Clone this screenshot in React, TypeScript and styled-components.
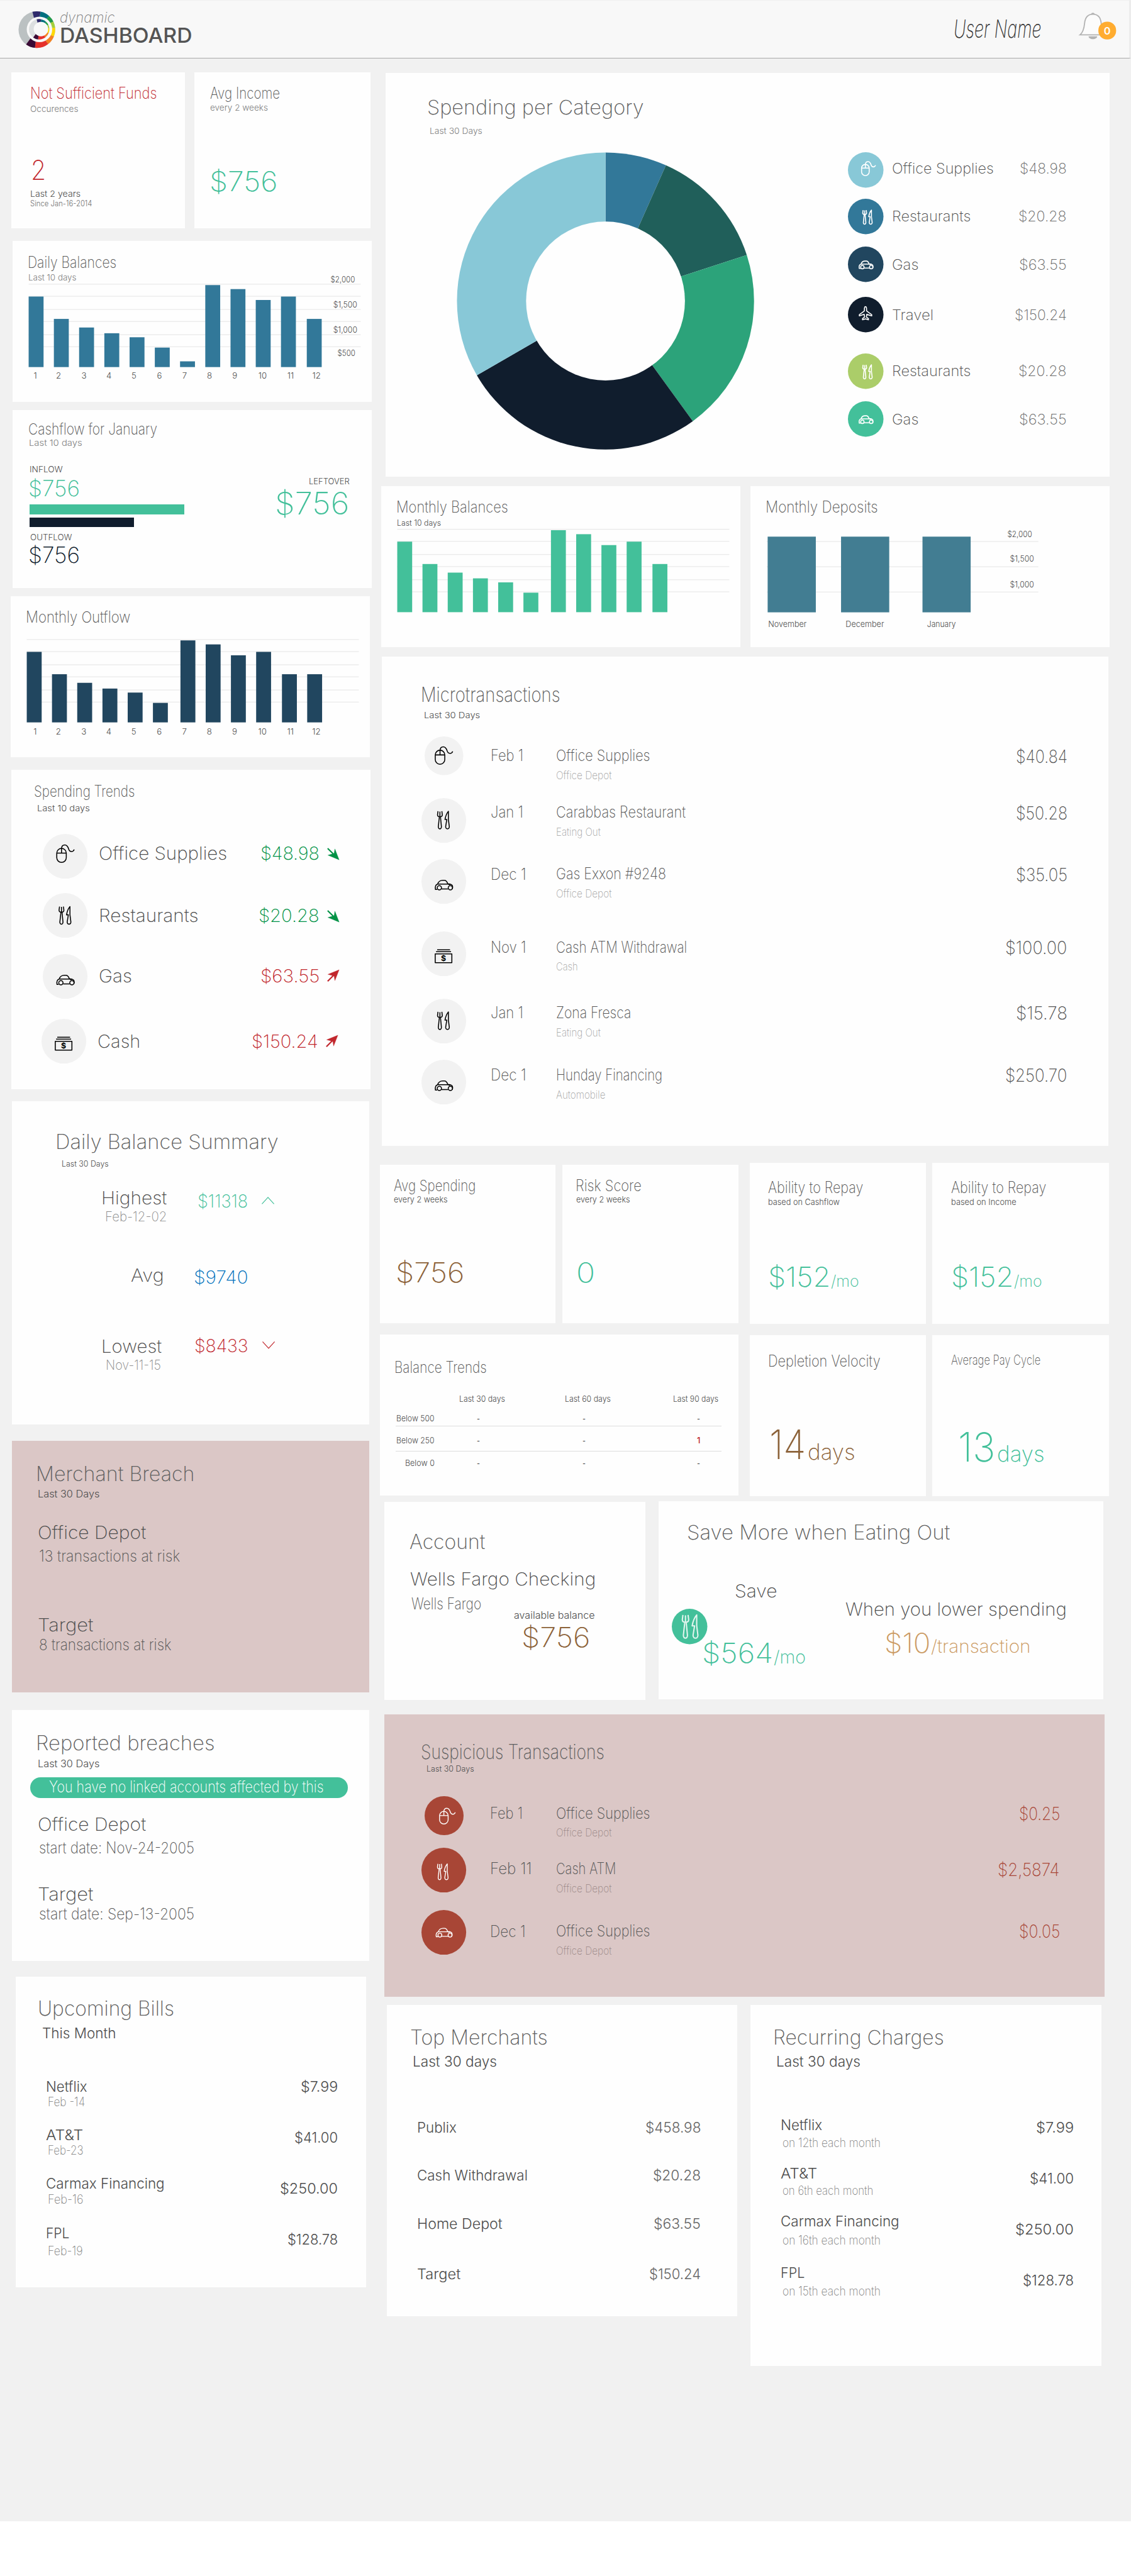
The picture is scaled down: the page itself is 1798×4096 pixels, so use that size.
import React from "react";
import styled, { createGlobalStyle } from "styled-components";

const GlobalStyle = createGlobalStyle`
  html, body { margin: 0; padding: 0; background: #fff; overflow: hidden; }
  * { box-sizing: border-box; }
`;

const FONT = 'Inter, "Open Sans", sans-serif';

const c = {
  ink: "#4d4d4d",
  grey: "#808080",
  soft: "#a6a6a6",
  green: "#43c09a",
  up: "#c1272d",
  down: "#009245",
  blue: "#0071bc",
  brown: "#8c6239",
  tan: "#cb9a62",
  navy: "#101d2d",
  rust: "#a84636",
  steel: "#327899",
  deep: "#21465f",
  sky: "#88c8d7",
};

/* ---------- type ---------- */

const kinds = {
  title: { size: 27.5, weight: 200, color: "#585858" },
  wide: { size: 35, weight: 200, color: "#606060" },
  caption: { size: 15, weight: 350, color: c.ink },
  label: { size: 31, weight: 250, color: c.ink },
  item: { size: 25, weight: 275, color: c.ink },
  thin: { size: 27.5, weight: 200, color: "#555" },
  note: { size: 19, weight: 200, color: "#8c8c8c" },
  amount: { size: 48, weight: 225, color: c.green },
};
type Kind = keyof typeof kinds;

let pen: CanvasRenderingContext2D | null = null;
const naturalWidth = (text: string, size: number, weight: number, italic?: boolean) => {
  pen = pen || document.createElement("canvas").getContext("2d")!;
  pen.font = `${italic ? "italic " : ""}${weight} 100px ${FONT}`;
  return (pen.measureText(text).width * size) / 100;
};

/* line-height 1 puts Inter's baseline .136em above the box bottom; the negative
   margin sets every size on the bottom edge of its Line */
const Glyphs = styled.span<{
  $size: number; $weight: number; $color: string; $lower: number; $gap: number; $push?: boolean; $italic?: boolean;
}>`
  flex: none;
  display: block;
  font-family: ${FONT};
  font-size: ${p => p.$size}px;
  font-weight: ${p => p.$weight};
  font-style: ${p => (p.$italic ? "italic" : "normal")};
  color: ${p => p.$color};
  line-height: 1;
  white-space: pre;
  transform-origin: 0 50%;
  margin-left: ${p => (p.$push ? "auto" : `${p.$gap}px`)};
  margin-bottom: calc(-0.136em - ${p => p.$lower + 0.8}px);
`;

interface TextProps {
  k: Kind; w: number; children: string; color?: string; size?: number; weight?: number;
  lower?: number; gap?: number; push?: boolean; italic?: boolean;
}
const Text = ({ k, w, children, color, size, weight, lower = 0, gap = 0, push, italic }: TextProps) => {
  const t = kinds[k];
  const s = size ?? t.size;
  const wt = weight ?? t.weight;
  const stretch = w / naturalWidth(children, s, wt, italic);
  return (
    <Glyphs $size={s} $weight={wt} $color={color ?? t.color} $lower={lower} $gap={gap} $push={push} $italic={italic}
      style={{ width: w, transform: `scaleX(${stretch.toFixed(4)})` }}>
      {children}
    </Glyphs>
  );
};

/* a line of text: its bottom edge is the baseline, its height the distance from the one above */
const Line = styled.div<{ $drop: number; $x?: number; $r?: number }>`
  display: flex;
  align-items: flex-end;
  height: ${p => p.$drop}px;
  padding-left: ${p => p.$x ?? 0}px;
  padding-right: ${p => p.$r ?? 0}px;
`;

/* ---------- layout ---------- */

const Viewport = styled.div`
  width: 1972px;
  height: 4492px;
  zoom: 0.911765;
  background: #fff;
`;
const Page = styled.div`
  height: 4397px;
  background: #f1f1f1;
`;
const Header = styled.header`
  height: 102px;
  display: flex;
  align-items: flex-start;
  background: #f8f8f8;
  border-top: 2px solid #f0f0f0;
  border-bottom: 1px solid #a9a9a9;
  border-right: 4px solid #ececec;
  padding-left: 32px;
`;
const Columns = styled.main`
  display: flex;
  align-items: flex-start;
`;
const Left = styled.div`
  width: 662px;
  flex: none;
`;
const Right = styled.div`
  flex: 1;
`;
const Row = styled.div<{ $gap: number; $mt: number; $ml: number }>`
  display: flex;
  align-items: flex-start;
  gap: ${p => p.$gap}px;
  margin: ${p => p.$mt}px 0 0 ${p => p.$ml}px;
`;
const Card = styled.section<{ $w: number; $h: number; $mt?: number; $ml?: number; $alert?: boolean }>`
  flex: none;
  width: ${p => p.$w}px;
  height: ${p => p.$h}px;
  margin-top: ${p => p.$mt ?? 0}px;
  margin-left: ${p => p.$ml ?? 0}px;
  background: ${p => (p.$alert ? "#dbc7c6" : "#fefefe")};
`;
const Drawing = styled.svg<{ $mt?: number; $ml?: number; $mb?: number }>`
  display: block;
  flex: none;
  overflow: visible;
  margin: ${p => p.$mt ?? 0}px 0 ${p => p.$mb ?? 0}px ${p => p.$ml ?? 0}px;
`;

/* ---------- icons ---------- */

type IconName = "mouse" | "fork" | "car" | "cash" | "plane";
const icons: Record<IconName, React.ReactNode> = {
  mouse: (
    <>
      <rect x="1" y="7" width="16.6" height="24.5" rx="8.3" />
      <path d="M1 15.2H17.6M9.3 15V7C9.6 2.6 12 1 15 1C19 1 20.6 4.6 21.6 7.8C22.6 11.2 24.4 12.6 26.8 12.6C29 12.6 30.6 11 31.4 9" />
    </>
  ),
  fork: (
    <>
      <path d="M1.8 1L1 7.2C1 9.8 2.6 10.8 5.2 10.8S9.4 9.8 9.4 7.2L8.6 1M5.2 1.6V10.8" />
      <path d="M4.2 11.4L2.4 27.8C2.2 33 8 33 7.8 27.8L6.2 11.4" />
      <path d="M20 1C17 4.6 15 9.6 14 15.4H17.2L15.2 27.8C15 33 21.8 33 21.6 27.8L20 15.4Z" />
    </>
  ),
  car: (
    <>
      <path d="M4.4 17H1.4C.4 12 2 8.8 5.2 7.6C6.8 3 9 1 14 1H17C20.8 1 21.8 4 23 7.2C28.4 7.4 31.6 8.8 31.4 12.4C31.4 14.6 31.4 15.4 30.8 16.2M12 16.2H23.6M5.2 7.6H23M23 7.4L26.4 9" />
      <circle cx="8.2" cy="14" r="3.7" />
      <circle cx="27.4" cy="14" r="3.7" />
    </>
  ),
  cash: (
    <>
      <path d="M4.4 1H26.8M2.4 4.4H28.6M1 8.2H30V23.6H1Z" />
      <text x="15.4" y="21" textAnchor="middle" fontFamily={FONT} fontSize="13.5" fontWeight="700" stroke="none" fill="currentColor">$</text>
    </>
  ),
  plane: (
    <path d="M15 1.4C12.8 1.4 12.4 5 12.6 10.6L1.6 19V21.4L12.2 18.2L13 24L8.6 27.6V30L15 28L21.4 30V27.6L17 24L17.8 18.2L28.6 21.4V19L17.4 10.6C17.6 5 17.2 1.4 15 1.4Z" />
  ),
};

interface DiscProps { name: IconName; d?: number; fill?: string; line?: string; dx: number; dy: number; scale?: number; stroke?: number; mt?: number; ml?: number }
const Disc = ({ name, d = 78, fill = "#f2f2f2", line = "#000", dx, dy, scale = 1, stroke = 1.7, mt, ml }: DiscProps) => (
  <Drawing width={d} height={d} viewBox={`0 0 ${d} ${d}`} $mt={mt} $ml={ml}>
    <circle cx={d / 2} cy={d / 2} r={d / 2} fill={fill} />
    <g transform={`translate(${dx} ${dy}) scale(${scale})`} fill="none" stroke={line} color={line} strokeWidth={stroke} strokeLinejoin="round">
      {icons[name]}
    </g>
  </Drawing>
);

const TrendArrow = ({ up }: { up?: boolean }) => (
  <Drawing width="21" height="21" viewBox="0 0 21 21" $ml={13}>
    <g transform={up ? "translate(0 21) scale(1 -1)" : undefined} fill={up ? c.up : c.down} stroke={up ? c.up : c.down}>
      <path d="M1 1L13 13" strokeWidth="2.4" />
      <path d="M21 21L13.6 2L12.2 10L1.4 13Z" strokeWidth=".4" />
    </g>
  </Drawing>
);

const Chevron = ({ down, mb }: { down?: boolean; mb?: number }) => (
  <Drawing width="22" height="13" viewBox="0 0 22 13" $ml={24} $mb={mb}>
    <path d={down ? "M.5 .5L11 12L21.5 .5" : "M.5 12.5L11 1L21.5 12.5"} fill="none" stroke={down ? c.up : c.green} strokeWidth="1.3" />
  </Drawing>
);

const wedge = (cx: number, cy: number, r: number, from: number, to: number) => {
  const p = (a: number) => `${(cx + r * Math.sin((a * Math.PI) / 180)).toFixed(2)} ${(cy - r * Math.cos((a * Math.PI) / 180)).toFixed(2)}`;
  return `M${cx} ${cy}L${p(from)}A${r} ${r} 0 ${to - from > 180 ? 1 : 0} 1 ${p(to)}Z`;
};

const spectrum: [number, number, string][] = [
  [-14, 12, "#2e2a6b"], [12, 42, "#00707f"], [42, 64, "#1f9a48"], [64, 84, "#a4cf3c"],
  [84, 112, "#ffd800"], [112, 142, "#f58220"], [142, 186, "#e5312b"], [186, 216, "#3a0a35"],
];

const Logo = () => (
  <Drawing width="64" height="66" viewBox="32 20 64 66" $mt={18}>
    <circle cx="64.5" cy="53" r="32" fill="#bbc1c2" />
    {spectrum.map(([a, b, f]) => <path key={a} d={wedge(64.5, 53, 32, a, b)} fill={f} />)}
    <circle cx="69" cy="52.6" r="22.2" fill="#f8f8f8" />
    <circle cx="68.5" cy="52.4" r="17.8" fill="#dcdfe0" />
    {spectrum.map(([a, b, f]) => <path key={a} d={wedge(68.5, 52.4, 17.8, a, b)} fill={f} />)}
    <circle cx="71.6" cy="52" r="12.6" fill="#f8f8f8" />
  </Drawing>
);

const Bell = () => (
  <Drawing width="64" height="50" viewBox="0 0 64 50" $mt={20} $ml={66}>
    <path d="M1 40C6 36 8 30 9 20C10 9 15 4 23.5 4S37 9 38 20C39 30 41 36 46 40Z" fill="#fcfcfc" stroke="#b3b3b3" strokeWidth="2" />
    <path d="M20.5 4C20.5 .5 26.5 .5 26.5 4M16 42.5H31C31 49 16 49 16 42.5" fill="#b3b3b3" />
    <rect x="33" y="17" width="31" height="31" rx="15" fill="#ffac30" />
    <text x="48.5" y="39" textAnchor="middle" fontFamily={FONT} fontSize="18" fontWeight="600" fill="#fff">0</text>
  </Drawing>
);

const Brand = styled.div`
  width: 240px;
  margin-left: 8px;
`;

/* ---------- charts ---------- */

interface ChartProps {
  box: [number, number, number, number]; color: string; base: number; barWidth?: number;
  bars: [number, number][]; grid: number[]; gridX: [number, number];
  ticks?: [number, string][]; tickY?: number; scale?: [number, number, string, number][]; tickWidths?: number[];
}
const BarChart = ({ box, color, base, barWidth = 26, bars, grid, gridX, ticks = [], tickY, scale = [], tickWidths }: ChartProps) => (
  <Drawing width={box[2]} height={box[3]} viewBox={box.join(" ")}>
    {grid.map(y => <rect key={y} x={gridX[0]} y={y - 0.5} width={gridX[1] - gridX[0]} height="1" fill="#e2e2e2" />)}
    {bars.map(([x, h]) => <rect key={x} x={x} y={base - h} width={barWidth} height={h} fill={color} />)}
    <g fontFamily={FONT} fontSize="14.5" fontWeight="300" fill={c.ink}>
      {ticks.map(([x, t], i) => (
        <text key={x} x={x} y={tickY} textAnchor="middle" textLength={tickWidths?.[i]} lengthAdjust="spacingAndGlyphs">{t}</text>
      ))}
      {scale.map(([x, y, t, w]) => (
        <text key={t} x={x} y={y} textAnchor="end" textLength={w} lengthAdjust="spacingAndGlyphs">{t}</text>
      ))}
    </g>
  </Drawing>
);

const dayTicks: [number, string][] = [61.5, 102, 146.5, 190, 233.6, 278, 322, 365.3, 409.5, 458, 506.8, 552].map((x, i) => [x, String(i + 1)]);
const zip = (xs: number[], hs: number[]): [number, number][] => xs.map((x, i) => [x, hs[i]]);

const Bar = styled.div<{ $w: number; $fill: string; $mt: number }>`
  width: ${p => p.$w}px;
  height: 17px;
  margin: ${p => p.$mt}px 0 0 30px;
  background: ${p => p.$fill};
`;

const slices: [number, number, string][] = [
  [0, 24, c.steel], [24, 72, "#205f5a"], [72, 144, "#2ca37a"], [144, 240, c.navy], [240, 360, c.sky],
];
const Donut = () => (
  <Drawing width="519" height="519" viewBox="0 0 519 519" $mt={31.5} $ml={124}>
    {slices.map(([a, b, f]) => <path key={a} d={wedge(259.5, 259.5, 259, a, b)} fill={f} />)}
    <circle cx="259.5" cy="259.5" r="138.5" fill="#fefefe" />
  </Drawing>
);

/* ---------- rows ---------- */

const Entry = styled.div<{ $h: number; $x?: number; $r?: number }>`
  display: flex;
  align-items: flex-start;
  height: ${p => p.$h}px;
  padding: 0 ${p => p.$r ?? 0}px 0 ${p => p.$x ?? 0}px;
`;
const EntryBody = styled.div<{ $ml: number }>`
  flex: 1;
  margin-left: ${p => p.$ml}px;
`;
const Slot = styled.div`
  width: 78px;
  display: flex;
  justify-content: center;
  flex: none;
`;
const DateCell = styled.div`
  width: 115px;
  flex: none;
  display: flex;
  align-items: flex-end;
`;
const Rows = styled.div<{ $mt: number }>`
  margin-top: ${p => p.$mt}px;
`;
const Split = styled.div`
  display: flex;
  align-items: flex-start;
`;
const Legend = styled.div`
  width: 381.7px;
  margin: 31.4px 0 0 163px;
`;
const Pill = styled.div`
  width: 553px;
  height: 36.5px;
  margin: 17.6px 0 0 32px;
  border-radius: 18px;
  background: ${c.green};
`;
const TableRow = styled.div<{ $h: number; $rule?: boolean }>`
  width: 568px;
  height: ${p => p.$h}px;
  margin-left: 27.6px;
  border-bottom: ${p => (p.$rule ? "1px solid #dedede" : "none")};
`;
const Cell = styled.div<{ $w: number; $end?: boolean }>`
  width: ${p => p.$w}px;
  flex: none;
  display: flex;
  align-items: flex-end;
  justify-content: ${p => (p.$end ? "flex-end" : "center")};
`;
const SaveLeft = styled.div`
  width: 326.5px;
`;

const legend: [IconName, string, number, number, number, string, number, number, string, number][] = [
  // icon, fill, dx, dy, pitch, label, label width, baseline, amount, amount width
  ["mouse", c.sky, 23, 15.6, 81.5, "Office Supplies", 175, 37.3, "$48.98", 81],
  ["fork", c.steel, 25, 19, 83.5, "Restaurants", 135, 39.3, "$20.28", 83],
  ["car", c.deep, 18.6, 24.6, 87.8, "Gas", 44, 39.9, "$63.55", 82],
  ["plane", c.navy, 18.6, 16, 98.7, "Travel", 70, 40, "$150.24", 90],
  ["fork", "#abcd69", 25, 19, 83.3, "Restaurants", 135, 39.1, "$20.28", 83],
  ["car", c.green, 18.6, 24.6, 62, "Gas", 44, 39.8, "$63.55", 82],
];

const trends: [IconName, number, number, number, number, string, number, string, number, boolean][] = [
  // icon, dx, dy, pitch, baseline, label, width, amount, width, rising
  ["mouse", 23.4, 18.2, 103.2, 44.7, "Office Supplies", 221, "$48.98", 102, false],
  ["fork", 27.4, 22.6, 105.7, 49.8, "Restaurants", 171, "$20.28", 105, false],
  ["car", 23.4, 36, 112.9, 49, "Gas", 55, "$63.55", 102.5, true],
  ["cash", 23, 31, 78, 50.1, "Cash", 72, "$150.24", 115, true],
];

interface Txn {
  icon: IconName; d?: number; dx: number; dy: number; scale?: number; h: number; base: number;
  date: string; dw: number; dl?: number; name: string; nw: number; sub: string; sw: number; amount: string; aw: number;
}
const micro: Txn[] = [
  { icon: "mouse", d: 67.5, dx: 17.6, dy: 17, h: 107.2, base: 42.7, date: "Feb 1", dw: 57, name: "Office Supplies", nw: 164, sub: "Office Depot", sw: 97, amount: "$40.84", aw: 90 },
  { icon: "fork", dx: 27, dy: 22, h: 106.1, base: 33.8, date: "Jan 1", dw: 57, name: "Carabbas Restaurant", nw: 226, sub: "Eating Out", sw: 77.6, amount: "$50.28", aw: 90 },
  { icon: "car", dx: 23, dy: 36, h: 126.8, base: 35.6, date: "Dec 1", dw: 62, dl: 0.8, name: "Gas Exxon #9248", nw: 192, sub: "Office Depot", sw: 97, amount: "$35.05", aw: 90 },
  { icon: "cash", dx: 23, dy: 31, h: 117.3, base: 36.3, date: "Nov 1", dw: 62, name: "Cash ATM Withdrawal", nw: 228.5, sub: "Cash", sw: 38, amount: "$100.00", aw: 108 },
  { icon: "fork", dx: 27, dy: 22, h: 106.1, base: 33.2, date: "Jan 1", dw: 57, name: "Zona Fresca", nw: 131, sub: "Eating Out", sw: 77.6, amount: "$15.78", aw: 90 },
  { icon: "car", dx: 23, dy: 36, h: 78, base: 35.8, date: "Dec 1", dw: 62, name: "Hunday Financing", nw: 185.5, sub: "Automobile", sw: 86, amount: "$250.70", aw: 108 },
];
const suspicious: Txn[] = [
  { icon: "mouse", d: 68, dx: 25.2, dy: 20.2, scale: 0.9, h: 90.1, base: 39, date: "Feb 1", dw: 57, name: "Office Supplies", nw: 164, sub: "Office Depot", sw: 97, amount: "$0.25", aw: 71.7 },
  { icon: "fork", dx: 27, dy: 27.2, scale: 0.9, h: 108.8, base: 46.5, date: "Feb 11", dw: 73, name: "Cash ATM", nw: 104.5, sub: "Office Depot", sw: 97, amount: "$2,5874", aw: 108 },
  { icon: "car", dx: 24.6, dy: 31, scale: 0.92, h: 79, base: 45.4, date: "Dec 1", dw: 62, dl: 1.3, name: "Office Supplies", nw: 164, sub: "Office Depot", sw: 97, amount: "$0.05", aw: 71.7 },
];

const Transactions = ({ rows, mt, x, r, alert }: { rows: Txn[]; mt: number; x: number; r: number; alert?: boolean }) => (
  <Rows $mt={mt}>
    {rows.map((t, i) => (
      <Entry key={i} $h={t.h} $x={x} $r={r}>
        <Slot>
          <Disc name={t.icon} d={t.d} dx={t.dx} dy={t.dy} scale={t.scale} fill={alert ? c.rust : undefined} line={alert ? "#fff" : undefined} />
        </Slot>
        <EntryBody $ml={41.8}>
          <Line $drop={t.base}>
            <DateCell><Text k="thin" w={t.dw} lower={t.dl}>{t.date}</Text></DateCell>
            <Text k="thin" w={t.nw}>{t.name}</Text>
            <Text k="thin" w={t.aw} size={31} lower={2.7} push color={alert ? c.rust : undefined}>{t.amount}</Text>
          </Line>
          <Line $drop={31} $x={115}>
            <Text k="note" w={t.sw} color={alert ? "#9a8887" : "#a3a3a3"}>{t.sub}</Text>
          </Line>
        </EntryBody>
      </Entry>
    ))}
  </Rows>
);

interface Charge { name: string; w: number; sub?: string; sw?: number; amount: string; aw: number; drop: number; lower?: number; subDrop?: number }
const bills: Charge[] = [
  { name: "Netflix", w: 72, sub: "Feb -14", sw: 65, amount: "$7.99", aw: 65, drop: 93, subDrop: 26 },
  { name: "AT&T", w: 65, sub: "Feb-23", sw: 62, amount: "$41.00", aw: 75.8, drop: 58.7, lower: 4, subDrop: 25 },
  { name: "Carmax Financing", w: 207, sub: "Feb-16", sw: 62, amount: "$250.00", aw: 101, drop: 58.8, lower: 9.5, subDrop: 27 },
  { name: "FPL", w: 41, sub: "Feb-19", sw: 61, amount: "$128.78", aw: 88, drop: 60.2, lower: 11.3, subDrop: 29.7 },
];
const recurring: Charge[] = [
  { name: "Netflix", w: 72.5, sub: "on 12th each month", sw: 171, amount: "$7.99", aw: 66, drop: 110.4, lower: 3.8, subDrop: 29.6 },
  { name: "AT&T", w: 64, sub: "on 6th each month", sw: 158.5, amount: "$41.00", aw: 77, drop: 54.2, lower: 9.1, subDrop: 29.2 },
  { name: "Carmax Financing", w: 207, sub: "on 16th each month", sw: 171, amount: "$250.00", aw: 102, drop: 54.7, lower: 14.3, subDrop: 31.7 },
  { name: "FPL", w: 42, sub: "on 15th each month", sw: 171, amount: "$128.78", aw: 89, drop: 58, lower: 13.6, subDrop: 31 },
];
const merchants: Charge[] = [
  { name: "Publix", w: 69, amount: "$458.98", aw: 97, drop: 114.2 },
  { name: "Cash Withdrawal", w: 193, amount: "$20.28", aw: 83.5, drop: 83.9 },
  { name: "Home Depot", w: 149, amount: "$63.55", aw: 82, drop: 83.9 },
  { name: "Target", w: 76, amount: "$150.24", aw: 90, drop: 87.8 },
];
const Charges = ({ rows, x, r, tone }: { rows: Charge[]; x: number; r: number; tone?: string }) => (
  <>
    {rows.map(b => (
      <React.Fragment key={b.name}>
        <Line $drop={b.drop} $x={x} $r={r}>
          <Text k="item" w={b.w}>{b.name}</Text>
          <Text k="item" w={b.aw} push lower={b.lower} color={tone}>{b.amount}</Text>
        </Line>
        {b.sub && <Line $drop={b.subDrop!} $x={x + 3}><Text k="note" size={21.5} w={b.sw!} color="#808080">{b.sub}</Text></Line>}
      </React.Fragment>
    ))}
  </>
);

const trendRows: [string, number, string[], boolean, number, number][] = [
  ["Below 500", 66.6, ["-", "-", "-"], true, 43.1, 34.4],
  ["Below 250", 66.6, ["-", "-", "1"], true, 43.9, 29.5],
  ["Below 0", 51.5, ["-", "-", "-"], false, 30, 25],
];

/* ---------- page ---------- */

export default function App() {
  return (
    <Viewport>
      <GlobalStyle />
      <Page>
        <Header>
          <Logo />
          <Brand>
            <Line $drop={37.2}><Text k="wide" w={96} size={25.5} italic weight={250} color="#808080">dynamic</Text></Line>
            <Line $drop={36.8}><Text k="wide" w={231} size={36.5} weight={550} color="#545454">DASHBOARD</Text></Line>
          </Brand>
          <Line $drop={63.4} $x={1319}>
            <Text k="wide" w={153} size={43} italic weight={250} color="#333">User Name</Text>
          </Line>
          <Bell />
        </Header>

        <Columns>
          <Left>
            <Row $gap={17} $mt={24} $ml={20}>
              <Card $w={302} $h={272}>
                <Line $drop={46} $x={33}><Text k="title" w={221} color={c.up} weight={250}>Not Sufficient Funds</Text></Line>
                <Line $drop={23.5} $x={33}><Text k="caption" w={84} color={c.grey}>Occurences</Text></Line>
                <Line $drop={118.5} $x={34}><Text k="amount" w={26.5} color={c.up} weight={250}>2</Text></Line>
                <Line $drop={29} $x={33}><Text k="caption" w={88}>Last 2 years</Text></Line>
                <Line $drop={17} $x={33}><Text k="caption" w={108} size={13.8} weight={300} color="#707070">Since Jan-16-2014</Text></Line>
              </Card>
              <Card $w={307} $h={272}>
                <Line $drop={46} $x={27}><Text k="title" w={122}>Avg Income</Text></Line>
                <Line $drop={21} $x={27}><Text k="caption" w={101} color={c.grey}>every 2 weeks</Text></Line>
                <Line $drop={141} $x={26.5}><Text k="amount" w={119}>$756</Text></Line>
              </Card>
            </Row>

            <Card $w={626} $h={281} $mt={22} $ml={22}>
              <Line $drop={47} $x={26}><Text k="title" w={155}>Daily Balances</Text></Line>
              <Line $drop={22} $x={27}><Text k="caption" w={84} color={c.grey}>Last 10 days</Text></Line>
              <BarChart box={[22, 489, 626, 212]} color={c.steel} base={640}
                bars={zip([50, 94, 138, 182, 226, 270, 314, 358, 402, 446, 490, 535], [123, 84, 69, 59, 52, 34, 10, 143, 136, 117, 123, 84])}
                grid={[495.5, 516.5, 539.5, 560.5, 583.5, 604.5]} gridX={[50, 629]}
                ticks={dayTicks} tickY={660}
                scale={[[619, 492.4, "$2,000", 42.5], [623, 536, "$1,500", 42], [623, 579.5, "$1,000", 42], [619.6, 621, "$500", 31]]} />
            </Card>

            <Card $w={626} $h={310} $mt={14} $ml={22}>
              <Line $drop={43} $x={27.5}><Text k="title" w={225}>Cashflow for January</Text></Line>
              <Line $drop={19.5} $x={28}><Text k="caption" w={93} color={c.grey}>Last 10 days</Text></Line>
              <Line $drop={46.5} $x={30} $r={38.5}>
                <Text k="caption" w={58}>INFLOW</Text>
                <Text k="caption" w={71} push lower={20.5}>LEFTOVER</Text>
              </Line>
              <Line $drop={40.7} $x={27.5} $r={39}>
                <Text k="amount" size={38} w={90}>$756</Text>
                <Text k="amount" size={54} w={130} push lower={32}>$756</Text>
              </Line>
              <Bar $w={269} $fill={c.green} $mt={15} />
              <Bar $w={182} $fill={c.navy} $mt={6} />
              <Line $drop={22.3} $x={31}><Text k="caption" w={73}>OUTFLOW</Text></Line>
              <Line $drop={38.4} $x={27.5}><Text k="amount" size={38} w={90} color={c.navy}>$756</Text></Line>
            </Card>

            <Card $w={626} $h={281} $mt={15} $ml={19}>
              <Line $drop={46} $x={25.5}><Text k="title" w={182.5}>Monthly Outflow</Text></Line>
              <BarChart box={[19, 1086, 626, 235]} color={c.deep} base={1260}
                bars={zip([47, 91, 135, 179, 223, 267, 315, 359, 403, 447, 492, 536], [123, 84, 69, 59, 52, 34, 143, 136, 117, 123, 84, 84])}
                grid={[1115.5, 1136.5, 1159.5, 1180.5, 1203.5, 1224.5]} gridX={[47, 626]}
                ticks={dayTicks} tickY={1281} />
            </Card>

            <Card $w={626} $h={557} $mt={22} $ml={20}>
              <Line $drop={46.3} $x={39.5}><Text k="title" w={176}>Spending Trends</Text></Line>
              <Line $drop={26} $x={45}><Text k="caption" w={92}>Last 10 days</Text></Line>
              <Rows $mt={39.5}>
                {trends.map(([icon, dx, dy, h, base, label, lw, amount, aw, up]) => (
                  <Entry key={label} $h={h} $x={label === "Cash" ? 52.6 : 54.6} $r={label === "Cash" ? 57 : 55}>
                    <Disc name={icon} dx={dx} dy={dy} />
                    <EntryBody $ml={19.5}>
                      <Line $drop={base}>
                        <Text k="label" w={lw + 3}>{label}</Text>
                        <Text k="label" w={aw + 1} push color={up ? c.up : c.down}>{amount}</Text>
                        <TrendArrow up={up} />
                      </Line>
                    </EntryBody>
                  </Entry>
                ))}
              </Rows>
            </Card>

            <Card $w={623} $h={563} $mt={21} $ml={21}>
              <Line $drop={82.5} $x={76}><Text k="wide" w={389}>Daily Balance Summary</Text></Line>
              <Line $drop={31.7} $x={87}><Text k="caption" w={82} size={14}>Last 30 Days</Text></Line>
              <Line $drop={65.4} $x={155.5}>
                <Text k="label" w={114.5}>Highest</Text>
                <Text k="label" w={88} gap={53} lower={4.6} color={c.green}>$11318</Text>
                <Chevron />
              </Line>
              <Line $drop={30.3} $x={162.5}><Text k="note" size={23} w={108}>Feb-12-02</Text></Line>
              <Line $drop={104} $x={207}>
                <Text k="label" w={58}>Avg</Text>
                <Text k="label" w={95} gap={52} lower={3} color={c.blue}>$9740</Text>
              </Line>
              <Line $drop={124.6} $x={155.5}>
                <Text k="label" w={105.5}>Lowest</Text>
                <Text k="label" w={94} gap={57} lower={-1.4} color={c.up}>$8433</Text>
                <Chevron down mb={7} />
              </Line>
              <Line $drop={29.6} $x={163.5}><Text k="note" size={23} w={96.5}>Nov-11-15</Text></Line>
            </Card>

            <Card $w={623} $h={438} $mt={29} $ml={21} $alert>
              <Line $drop={70} $x={42}><Text k="wide" w={277}>Merchant Breach</Text></Line>
              <Line $drop={29} $x={45}><Text k="caption" size={17.5} weight={300} w={108}>Last 30 Days</Text></Line>
              <Line $drop={72} $x={44.5}><Text k="label" w={189}>Office Depot</Text></Line>
              <Line $drop={39} $x={47.5}><Text k="thin" w={246}>13 transactions at risk</Text></Line>
              <Line $drop={122} $x={45}><Text k="label" w={97}>Target</Text></Line>
              <Line $drop={33} $x={47.5}><Text k="thin" w={231}>8 transactions at risk</Text></Line>
            </Card>

            <Card $w={623} $h={438} $mt={31} $ml={21}>
              <Line $drop={70} $x={42}><Text k="wide" w={312}>Reported breaches</Text></Line>
              <Line $drop={29.7} $x={45}><Text k="caption" size={17.5} weight={300} w={108}>Last 30 Days</Text></Line>
              <Pill>
                <Line $drop={27} $x={32.5}><Text k="thin" w={479} color="#fff" weight={250}>You have no linked accounts affected by this</Text></Line>
              </Pill>
              <Line $drop={57.2} $x={44.5}><Text k="label" w={189}>Office Depot</Text></Line>
              <Line $drop={39.4} $x={47.5}><Text k="thin" w={271}>start date: Nov-24-2005</Text></Line>
              <Line $drop={81.6} $x={45}><Text k="label" w={97}>Target</Text></Line>
              <Line $drop={34} $x={47.5}><Text k="thin" w={271}>start date: Sep-13-2005</Text></Line>
            </Card>

            <Card $w={611} $h={542} $mt={27} $ml={27}>
              <Line $drop={68} $x={39}><Text k="wide" w={238}>Upcoming Bills</Text></Line>
              <Line $drop={40} $x={47}><Text k="item" w={129}>This Month</Text></Line>
              <Charges rows={bills} x={53.5} r={48.5} />
            </Card>
          </Left>

          <Right>
            <Card $w={1263} $h={704} $mt={25} $ml={10}>
              <Line $drop={72.8} $x={73}><Text k="wide" w={378}>Spending per Category</Text></Line>
              <Line $drop={34.2} $x={77}><Text k="caption" w={92} color={c.grey}>Last 30 Days</Text></Line>
              <Split>
                <Donut />
                <Legend>
                  {legend.map(([icon, fill, dx, dy, h, label, lw, base, amount, aw], i) => (
                    <Entry key={i} $h={h}>
                      <Disc name={icon} d={62} dx={dx} dy={dy} scale={0.8} stroke={2.2} fill={fill} line="#fff" />
                      <EntryBody $ml={15}>
                        <Line $drop={base}>
                          <Text k="item" w={lw + 2.5} weight={250}>{label}</Text>
                          <Text k="item" w={aw + 1} weight={250} push color="#6a6a6a">{amount}</Text>
                        </Line>
                      </EntryBody>
                    </Entry>
                  ))}
                </Legend>
              </Split>
            </Card>

            <Row $gap={18} $mt={17} $ml={3}>
              <Card $w={626} $h={281}>
                <Line $drop={46} $x={26}><Text k="title" w={195}>Monthly Balances</Text></Line>
                <Line $drop={23.3} $x={27.5}><Text k="caption" size={14} w={77}>Last 10 days</Text></Line>
                <BarChart box={[665, 917.3, 626, 211]} color={c.green} base={1068}
                  bars={zip([693, 737, 781, 825, 869, 913, 961, 1005, 1049, 1093, 1138], [123, 84, 69, 59, 52, 34, 143, 136, 117, 123, 84])}
                  grid={[923.5, 944.5, 967.5, 988.5, 1011.5, 1032.5]} gridX={[693, 1272]} />
              </Card>
              <Card $w={626} $h={281}>
                <Line $drop={46} $x={26}><Text k="title" w={196}>Monthly Deposits</Text></Line>
                <BarChart box={[1309, 894, 626, 235]} color="#427d92" base={1068} barWidth={84}
                  bars={[[1339, 132], [1467, 132], [1609, 132]]}
                  grid={[944.5, 988.5, 1032.5]} gridX={[1337, 1811]}
                  ticks={[[1373.5, "November"], [1508.5, "December"], [1642, "January"]]} tickY={1094} tickWidths={[67, 67, 50]}
                  scale={[[1800, 936.7, "$2,000", 43], [1803.5, 980, "$1,500", 42], [1803.5, 1024, "$1,000", 42]]} />
              </Card>
            </Row>

            <Card $w={1267} $h={853} $mt={16} $ml={4}>
              <Line $drop={78.6} $x={67.5}><Text k="wide" w={243}>Microtransactions</Text></Line>
              <Line $drop={29.2} $x={73.5}><Text k="caption" w={98} weight={300}>Last 30 Days</Text></Line>
              <Transactions rows={micro} mt={31.9} x={69.2} r={72} />
            </Card>

            <Row $gap={0} $mt={30} $ml={0}>
              <Card $w={307} $h={277} $mt={3}>
                <Line $drop={46.5} $x={24.5}><Text k="title" w={143}>Avg Spending</Text></Line>
                <Line $drop={19.5} $x={24.5}><Text k="caption" w={94} weight={300}>every 2 weeks</Text></Line>
                <Line $drop={140} $x={27.5}><Text k="amount" w={120} color={c.brown}>$756</Text></Line>
              </Card>
              <Card $w={307} $h={277} $mt={3} $ml={12}>
                <Line $drop={46.5} $x={22.5}><Text k="title" w={115}>Risk Score</Text></Line>
                <Line $drop={19.5} $x={24}><Text k="caption" w={94} weight={300}>every 2 weeks</Text></Line>
                <Line $drop={140} $x={24}><Text k="amount" w={33}>0</Text></Line>
              </Card>
              <Card $w={308} $h={281} $ml={19}>
                <Line $drop={52.6} $x={32}><Text k="title" w={166}>Ability to Repay</Text></Line>
                <Line $drop={21.4} $x={32}><Text k="caption" w={125} weight={300}>based on Cashflow</Text></Line>
                <Line $drop={141.8} $x={32}>
                  <Text k="amount" w={109}>$152</Text>
                  <Text k="amount" size={28} w={49} gap={1}>/mo</Text>
                </Line>
              </Card>
              <Card $w={308} $h={281} $ml={11}>
                <Line $drop={52.6} $x={32}><Text k="title" w={166}>Ability to Repay</Text></Line>
                <Line $drop={21.4} $x={32}><Text k="caption" w={114} weight={300}>based on Income</Text></Line>
                <Line $drop={141.8} $x={32}>
                  <Text k="amount" w={109}>$152</Text>
                  <Text k="amount" size={28} w={49} gap={1}>/mo</Text>
                </Line>
              </Card>
            </Row>

            <Row $gap={0} $mt={18} $ml={0}>
              <Card $w={626} $h={281}>
                <Line $drop={67.4} $x={26}><Text k="title" w={161}>Balance Trends</Text></Line>
                <Line $drop={50} $x={139}>
                  <Text k="caption" w={80} weight={300}>Last 30 days</Text>
                  <Text k="caption" w={80} weight={300} gap={104}>Last 60 days</Text>
                  <Text k="caption" w={79} weight={300} gap={109}>Last 90 days</Text>
                </Line>
                {trendRows.map(([label, w, cells, rule, h, base]) => (
                  <TableRow key={label} $h={h} $rule={rule}>
                    <Line $drop={base}>
                      <Cell $w={68.4} $end><Text k="caption" w={w} weight={300}>{label}</Text></Cell>
                      {cells.map((v, i) => (
                        <Cell key={i} $w={[151.6, 217.6, 181.6][i]}>
                          <Text k="caption" w={v === "1" ? 6 : 5.5} weight={v === "1" ? 500 : 350} lower={v === "1" ? 0 : 1.5}
                            color={v === "1" ? c.up : "#222"}>{v}</Text>
                        </Cell>
                      ))}
                    </Line>
                  </TableRow>
                ))}
              </Card>
              <Card $w={308} $h={281} $mt={1} $ml={19}>
                <Line $drop={55.8} $x={32}><Text k="title" w={196}>Depletion Velocity</Text></Line>
                <Line $drop={160.6} $x={34.5}>
                  <Text k="amount" size={70} w={64} color={c.brown}>14</Text>
                  <Text k="amount" size={38} w={83} gap={2.5} color={c.brown}>days</Text>
                </Line>
              </Card>
              <Card $w={308} $h={281} $mt={1} $ml={11}>
                <Line $drop={52} $x={32}><Text k="title" size={24} w={156}>Average Pay Cycle</Text></Line>
                <Line $drop={168} $x={44.5}>
                  <Text k="amount" size={70} w={65}>13</Text>
                  <Text k="amount" size={38} w={83} gap={3}>days</Text>
                </Line>
              </Card>
            </Row>

            <Row $gap={23} $mt={9} $ml={8}>
              <Card $w={455} $h={346} $mt={1}>
                <Line $drop={82} $x={44.5}><Text k="wide" w={132}>Account</Text></Line>
                <Line $drop={64} $x={45.5}><Text k="label" w={324}>Wells Fargo Checking</Text></Line>
                <Line $drop={42} $x={47.5}><Text k="title" w={122}>Wells Fargo</Text></Line>
                <Line $drop={16} $x={226}><Text k="caption" size={18} w={141} weight={275}>available balance</Text></Line>
                <Line $drop={50} $x={239}><Text k="amount" w={120} color={c.brown}>$756</Text></Line>
              </Card>
              <Card $w={776} $h={346}>
                <Line $drop={67} $x={50}><Text k="wide" w={459}>Save More when Eating Out</Text></Line>
                <Line $drop={101} $x={133.5}><Text k="label" w={74}>Save</Text></Line>
                <Split>
                  <SaveLeft>
                    <Disc name="fork" d={62} dx={17} dy={9.5} scale={1.32} fill={c.green} line="#e4f5ef" mt={20} ml={23} />
                    <Line $drop={32.6} $x={76}>
                      <Text k="amount" w={124}>$564</Text>
                      <Text k="amount" size={31} w={56} gap={1}>/mo</Text>
                    </Line>
                  </SaveLeft>
                  <div>
                    <Line $drop={31}><Text k="label" w={386}>When you lower spending</Text></Line>
                    <Line $drop={65} $x={67.5}>
                      <Text k="amount" w={80.5} color={c.tan}>$10</Text>
                      <Text k="amount" size={31} w={174} gap={1} color={c.tan}>/transaction</Text>
                    </Line>
                  </div>
                </Split>
              </Card>
            </Row>

            <Card $w={1256} $h={492} $mt={25} $ml={8} $alert>
              <Line $drop={77.3} $x={64}><Text k="wide" w={320}>Suspicious Transactions</Text></Line>
              <Line $drop={22.7} $x={74}><Text k="caption" size={14} w={83}>Last 30 Days</Text></Line>
              <Transactions rows={suspicious} mt={42.4} x={65} r={78} alert />
            </Card>

            <Row $gap={24} $mt={15} $ml={12}>
              <Card $w={611} $h={543}>
                <Line $drop={68} $x={41}><Text k="wide" w={240}>Top Merchants</Text></Line>
                <Line $drop={39.6} $x={46}><Text k="item" w={147}>Last 30 days</Text></Line>
                <Charges rows={merchants} x={53} r={63} tone="#666" />
              </Card>
              <Card $w={611} $h={629}>
                <Line $drop={68} $x={39.5}><Text k="wide" w={298}>Recurring Charges</Text></Line>
                <Line $drop={39.6} $x={45}><Text k="item" w={147}>Last 30 days</Text></Line>
                <Charges rows={recurring} x={52.5} r={48} />
              </Card>
            </Row>
          </Right>
        </Columns>
      </Page>
    </Viewport>
  );
}
